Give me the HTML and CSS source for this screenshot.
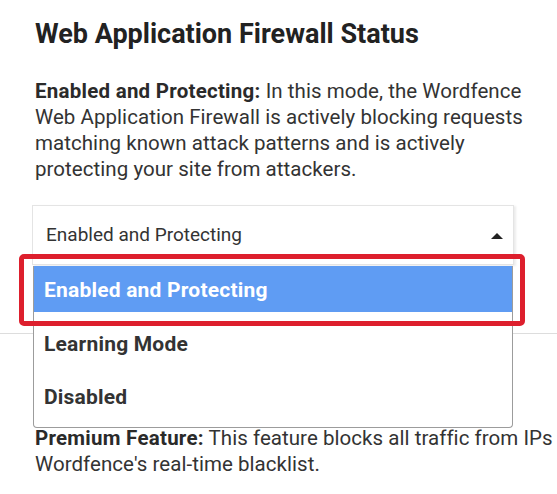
FILE: index.html
```html
<!DOCTYPE html>
<html>
<head>
<meta charset="utf-8">
<link rel="stylesheet" href="styles.css">
</head>
<body>
<div class="page">
  <section class="panel">
    <h2 class="title">Web Application Firewall Status</h2>
    <p class="desc"><strong>Enabled and Protecting:</strong> In this mode, the Wordfence Web Application Firewall is actively blocking requests matching known attack patterns and is actively protecting your site from attackers.</p>
    <div class="select-wrap">
      <div class="select">
        <span class="select-value">Enabled and Protecting</span>
        <span class="caret"></span>
      </div>
      <ul class="menu">
        <li class="opt opt-active">Enabled and Protecting</li>
        <li class="opt opt-2">Learning Mode</li>
        <li class="opt opt-3">Disabled</li>
      </ul>
      <div class="highlight"></div>
    </div>
  </section>
  <div class="divider"></div>
  <section class="panel">
    <p class="premium"><strong>Premium Feature:</strong> This feature blocks all traffic from IPs on<br>Wordfence's real-time blacklist.</p>
  </section>
</div>
</body>
</html>
```
FILE: styles.css
```css
html, body {
  margin: 0;
  padding: 0;
  background: #ffffff;
  overflow: hidden;
}
body {
  width: 557px;
  height: 494px;
  font-family: Roboto, "Liberation Sans", sans-serif;
  color: #333333;
}
.page {
  display: flex;
  flex-direction: column;
}
.panel {
  padding-left: 35px;
  padding-right: 20px;
}
.title {
  margin: 18px 0 0 0;
  font-size: 27px;
  line-height: 32px;
  font-weight: 700;
  color: #222222;
}
.desc {
  margin: 28px 0 0 0;
  font-size: 20.5px;
  letter-spacing: 0.05px;
  line-height: 26px;
  color: #333333;
  width: 494px;
}
.desc strong,
.premium strong {
  font-weight: 700;
  color: #2a2a2a;
  letter-spacing: 0.25px;
}
.select-wrap {
  position: relative;
  margin-top: 23px;
  margin-left: -3px;
  width: 482px;
}
.select {
  height: 60px;
  box-sizing: border-box;
  border: 1px solid #e4e4e4;
  box-shadow: 2px 1px 2px rgba(0,0,0,0.08);
  display: flex;
  align-items: center;
  justify-content: space-between;
  padding: 0 10px 0 13px;
  background: #fff;
}
.select-value {
  font-size: 19px;
  line-height: 26px;
  color: #333;
  margin-top: 0;
}
.caret {
  width: 0;
  height: 0;
  border-left: 6px solid transparent;
  border-right: 6px solid transparent;
  border-bottom: 6px solid #222;
  margin-top: 2px;
}
.menu {
  position: absolute;
  left: 1px;
  top: 61px;
  width: 480px;
  height: 162px;
  box-sizing: border-box;
  margin: 0;
  padding: 0;
  list-style: none;
  background: #fff;
  border: 1px solid #9c9c9c;
  border-top: none;
  border-radius: 0 0 4px 4px;
  z-index: 2;
}
.opt {
  box-sizing: border-box;
  padding-left: 10px;
  font-size: 21px;
  letter-spacing: 0.2px;
  font-weight: 700;
  color: #333;
  display: flex;
  align-items: center;
}
.opt-active {
  height: 46px;
  background: #5f9cf3;
  color: #fff;
  padding-top: 2px;
}
.opt-2 {
  height: 56px;
  padding-top: 8px;
}
.opt-3 {
  height: 56px;
  padding-top: 2px;
}
.highlight {
  position: absolute;
  left: -13px;
  top: 49px;
  width: 506px;
  height: 72px;
  box-sizing: border-box;
  border: 5px solid #dd1f2d;
  border-radius: 5px;
  z-index: 3;
}
.divider {
  margin-top: 68px;
  height: 1px;
  background: #dddddd;
}
.premium {
  margin: 91px 0 0 0;
  font-size: 20.5px;
  letter-spacing: 0.05px;
  line-height: 26px;
  color: #333;
  white-space: nowrap;
}
```
